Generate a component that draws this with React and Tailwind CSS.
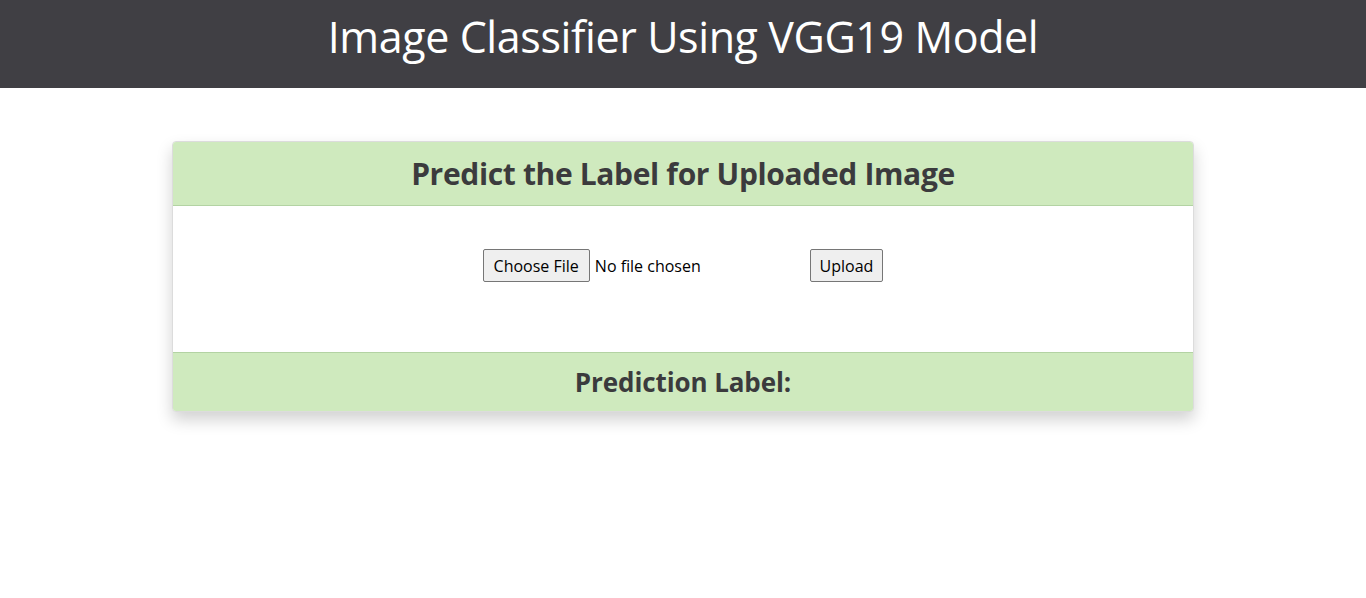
import React from 'react';

const font = { fontFamily: '"Open Sans", "Noto Sans", sans-serif' };

const App = () => {
  return (
    <div className="min-h-screen bg-white text-[#212529]" style={font}>
      {/* Top bar */}
      <div className="h-[88px] bg-[#403f44] flex items-center justify-center">
        <h1 className="text-[43px] font-normal text-white tracking-[-0.4px] leading-none pb-[16px]">
          Image Classifier Using VGG19 Model
        </h1>
      </div>

      {/* Card */}
      <div className="pt-[53px] px-[172px]">
        <div className="rounded-[4px] border border-[#dcdcdc] bg-white shadow-[0_8px_16px_rgba(0,0,0,0.18)] overflow-hidden">
          <div className="h-[64px] bg-[#cfeabe] border-b border-[#b3d3a3] flex items-center justify-center">
            <h2 className="text-[30px] font-bold text-[#3b3b3d] tracking-[-0.35px]">Predict the Label for Uploaded Image</h2>
          </div>
          <div className="h-[146px] flex justify-center pt-[43px]">
            <form className="flex items-start" onSubmit={e => e.preventDefault()}>
              <input type="file" className="text-[16px] w-[253px] text-black file:h-[33px] file:px-[10px] file:mr-[5px] file:border file:border-[#767676] file:bg-[#efefef] file:rounded-[2px] file:text-black file:text-[16px]" />
              <button type="submit" className="ml-[74px] h-[33px] px-[9px] border border-[#767676] bg-[#efefef] rounded-[2px] text-[16px] text-black">Upload</button>
            </form>
          </div>
          <div className="h-[59px] bg-[#cfeabe] border-t border-[#b3d3a3] flex items-center justify-center">
            <h3 className="text-[26px] font-bold text-[#3b3b3d] tracking-[-0.1px]">Prediction Label:</h3>
          </div>
        </div>
      </div>
    </div>
  );
};

export default App;
